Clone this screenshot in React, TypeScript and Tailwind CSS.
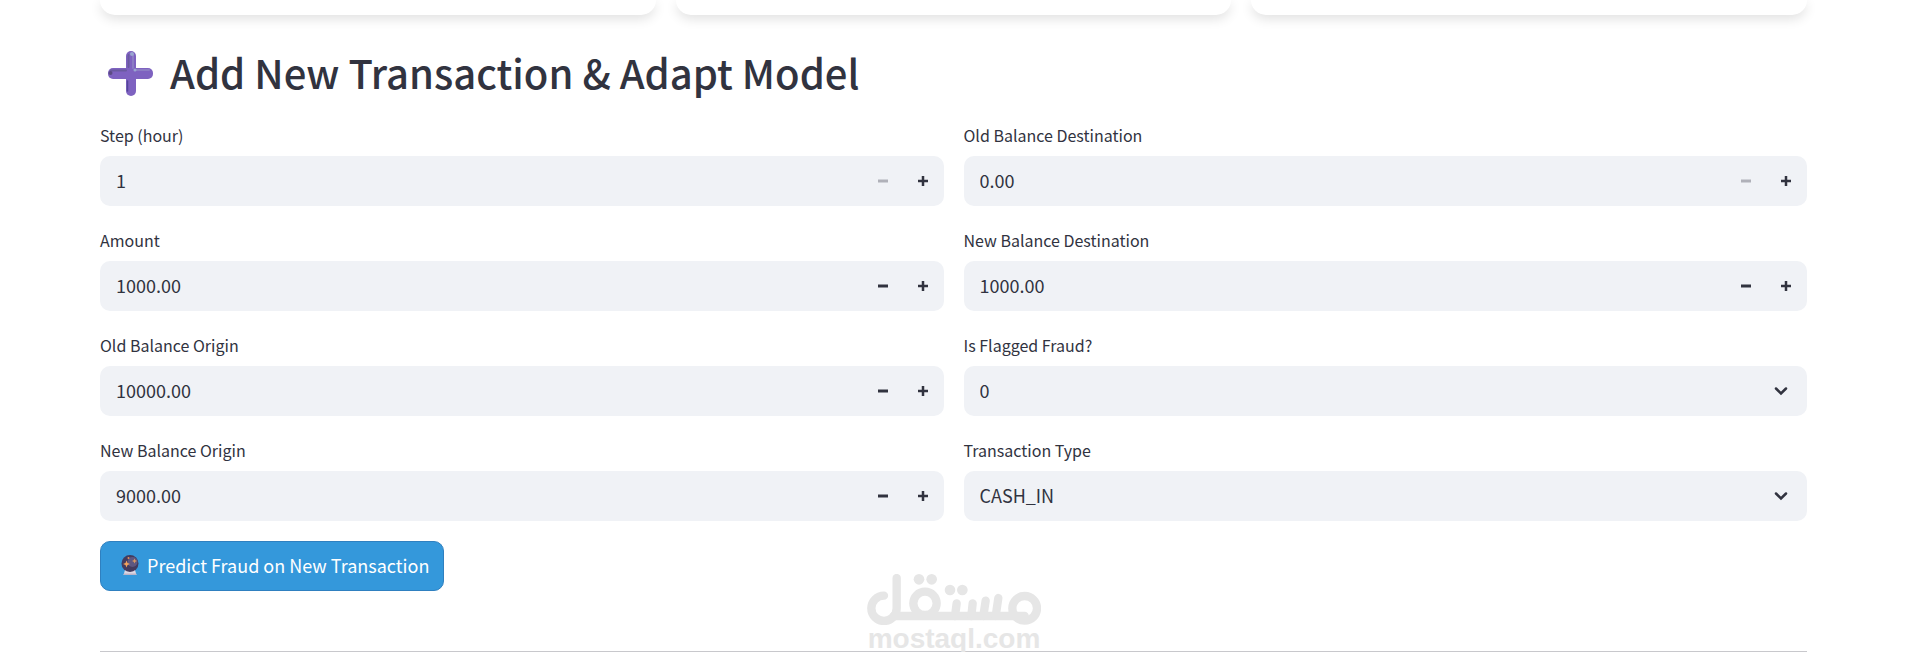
import React, { useId, useState } from 'react';

const PlusEmoji: React.FC = () => (
    <svg viewBox="0 0 45 45" className="w-[45px] h-[45px] shrink-0" aria-hidden="true">
        <rect x="18" y="0" width="10" height="45" rx="5" fill="#7e62c0" />
        <rect x="0" y="17" width="45" height="11" rx="5" fill="#7e62c0" />
        <path d="M20.500 4v12M3 19.500h15" stroke="#6a5aa0" strokeWidth="2" strokeLinecap="round" />
        <path d="M19.500 30v10" stroke="#54459a" strokeWidth="1.500" strokeLinecap="round" />
        <path d="M25 4v13M27 19h14" stroke="#8c7cc4" strokeWidth="2" strokeLinecap="round" />
        <circle cx="24" cy="3" r="2" fill="#9aa5d0" />
        <circle cx="27" cy="19" r="1.500" fill="#9aa5d0" />
        <circle cx="2.500" cy="22" r="2" fill="#5b4b83" />
    </svg>
);

const CrystalBall: React.FC = () => (
    <svg viewBox="0 0 18 20" className="w-[18px] h-5 shrink-0" aria-hidden="true">
        <path d="M4 15h10l1.500 5h-13z" fill="#dcd8e4" />
        <path d="M3 18.500h12l.5 1.500h-13z" fill="#bcb4c8" />
        <circle cx="9" cy="8.500" r="8.500" fill="#433b5e" />
        <circle cx="11.500" cy="7" r="5" fill="#5d5781" />
        <path d="M5.500 5.500l1 2.500 2.500 1-2.500 1-1 2.500-1-2.500L2 9l2.500-1z" fill="#f5a35c" />
        <path d="M13.500 3.500l.8 1.700 1.700.8-1.700.8-.8 1.700-.8-1.700-1.700-.8 1.700-.8z" fill="#d99a63" />
        <circle cx="7.500" cy="3" r="1" fill="#e8925a" />
    </svg>
);

const MinusIcon: React.FC = () => (
    <svg viewBox="0 0 10 10" className="w-[10px] h-[10px]" aria-hidden="true">
        <path d="M0 5h10" stroke="currentColor" strokeWidth="3" />
    </svg>
);

const PlusIcon: React.FC = () => (
    <svg viewBox="0 0 10 10" className="w-[10px] h-[10px]" aria-hidden="true">
        <path d="M0 5h10M5 0v10" stroke="currentColor" strokeWidth="2.500" />
    </svg>
);

interface NumberFieldProps {
    label: string;
    initial: number;
    min?: number;
    decimals?: number;
}

const NumberField: React.FC<NumberFieldProps> = ({ label, initial, min = 0, decimals = 2 }) => {
    const id = useId();
    const [text, setText] = useState(initial.toFixed(decimals));
    const value = Number(text) || 0;
    const step = decimals === 0 ? 1 : 0.01;

    const change = (delta: number) => {
        setText(Math.max(min, value + delta).toFixed(decimals));
    };

    return (
        <div>
            <label htmlFor={id} className="block h-5 mb-[10px] text-base leading-[18px]">{label}</label>
            <div className="flex h-[50px] pr-px rounded-[10px] bg-[#f0f2f6] overflow-hidden">
                <input
                    id={id}
                    type="text"
                    inputMode="decimal"
                    value={text}
                    onChange={(e) => setText(e.target.value)}
                    onBlur={() => change(0)}
                    className="min-w-0 flex-1 pl-4 pb-0.5 text-lg leading-7 bg-transparent focus:outline-none"
                />
                <button
                    type="button"
                    aria-label={`Decrease ${label}`}
                    disabled={value <= min}
                    onClick={() => change(-step)}
                    className="w-10 flex items-center justify-center disabled:text-[#b0b1b9]"
                >
                    <MinusIcon />
                </button>
                <button
                    type="button"
                    aria-label={`Increase ${label}`}
                    onClick={() => change(step)}
                    className="w-10 flex items-center justify-center"
                >
                    <PlusIcon />
                </button>
            </div>
        </div>
    );
};

const SelectField: React.FC<{ label: string; options: string[] }> = ({ label, options }) => {
    const id = useId();

    return (
        <div>
            <label htmlFor={id} className="block h-5 mb-[10px] text-base leading-[18px]">{label}</label>
            <div className="relative">
                <select
                    id={id}
                    className="block w-full h-[50px] pl-4 pr-12 pb-0.5 appearance-none rounded-[10px] bg-[#f0f2f6] text-lg leading-7 focus:outline-none"
                >
                    {options.map((option) => (
                        <option key={option}>{option}</option>
                    ))}
                </select>
                <svg
                    viewBox="0 0 14 10"
                    className="absolute right-[19px] top-5 w-[14px] h-[10px] pointer-events-none"
                    aria-hidden="true"
                >
                    <path d="M2 2.500l5 5 5-5" fill="none" stroke="currentColor" strokeWidth="2.500" strokeLinecap="round" />
                </svg>
            </div>
        </div>
    );
};

const Watermark: React.FC = () => (
    <div className="absolute left-1/2 top-[574px] -translate-x-1/2 flex flex-col items-center text-[#e6e6e6] pointer-events-none">
        <svg
            viewBox="80 42 522 153"
            className="w-[174px] h-[51px]"
            fill="none"
            stroke="currentColor"
            strokeWidth="25"
            strokeLinecap="round"
            role="img"
            aria-label="مستقل"
        >
            <circle cx="553" cy="145" r="37" />
            <circle cx="254" cy="130" r="35" />
            <path d="M169 54v91a38 38 0 1 1-38-38" />
            <path d="M160 168h393" />
            <path d="M349 130l-5 38M397 130l-4 38M436 122l-7 46M474 114l-8 54" />
            <g fill="currentColor" stroke="none">
                <circle cx="236" cy="58" r="16" />
                <circle cx="274" cy="58" r="16" />
                <circle cx="329" cy="90" r="16" />
                <circle cx="366" cy="90" r="16" />
            </g>
        </svg>
        <span className="font-['Liberation_Sans',Arial,sans-serif] font-bold text-[28px] leading-7">mostaql.com</span>
    </div>
);

export default function App() {
    return (
        <div className="relative bg-white text-[#31333f] font-['Noto_Sans_CJK_SC','Noto_Sans',sans-serif]">
            <main className="pl-[100px] pr-[101px]">
                <div className="grid grid-cols-3 gap-5">
                    {[0, 1, 2].map((card) => (
                        <div key={card} className="h-[15px] rounded-b-[15px] bg-white shadow-[0_4px_12px_rgba(0,0,0,0.12)]" />
                    ))}
                </div>

                <h2 className="flex items-center gap-[17px] h-[54px] mt-[31px] pl-2 text-[40px] leading-[52px] font-medium">
                    <PlusEmoji />
                    <span className="pb-0.5">Add New Transaction &amp; Adapt Model</span>
                </h2>

                <form onSubmit={(e) => e.preventDefault()} className="mt-[26px]">
                    <div className="grid grid-cols-2 gap-5">
                        <div className="flex flex-col gap-[25px]">
                            <NumberField label="Step (hour)" initial={1} min={1} decimals={0} />
                            <NumberField label="Amount" initial={1000} />
                            <NumberField label="Old Balance Origin" initial={10000} />
                            <NumberField label="New Balance Origin" initial={9000} />
                        </div>
                        <div className="flex flex-col gap-[25px]">
                            <NumberField label="Old Balance Destination" initial={0} />
                            <NumberField label="New Balance Destination" initial={1000} />
                            <SelectField label="Is Flagged Fraud?" options={['0', '1']} />
                            <SelectField
                                label="Transaction Type"
                                options={['CASH_IN', 'CASH_OUT', 'DEBIT', 'PAYMENT', 'TRANSFER']}
                            />
                        </div>
                    </div>

                    <button
                        type="submit"
                        className="flex items-center gap-2 h-[50px] mt-5 pl-5 pr-[14px] pb-0.5 rounded-[10px] border border-[#2f80c0] bg-[#3498db] text-white text-lg leading-7"
                    >
                        <CrystalBall />
                        Predict Fraud on New Transaction
                    </button>
                </form>

                <hr className="mt-[60px] border-[#c8c8cc]" />
            </main>

            <Watermark />
        </div>
    );
}
